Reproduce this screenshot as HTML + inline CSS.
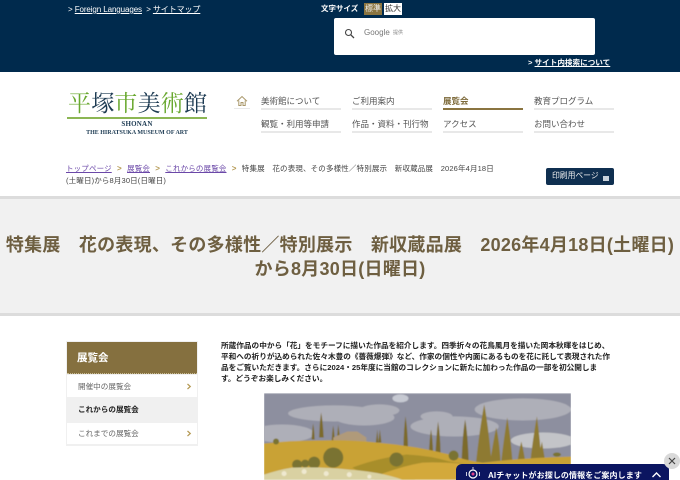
<!DOCTYPE html>
<html lang="ja"><head><meta charset="utf-8"><title>特集展 花の表現</title>
<style>
*{margin:0;padding:0;box-sizing:border-box}
html,body{width:680px;height:480px;overflow:hidden;background:#fff}
body{position:relative;font-family:"Liberation Sans","Noto Sans CJK JP",sans-serif;color:#333}
.a{position:absolute;white-space:nowrap}
.nav{position:absolute;font-size:8.5px;line-height:12px;color:#555;white-space:nowrap}
.ln{position:absolute;height:2px;background:#e8e8e8}
.top{color:#fff;font-size:8px;line-height:12px;letter-spacing:-.1px}
.top u{text-underline-offset:1px}
.crumb{font-size:7.5px;line-height:11px;letter-spacing:.15px;color:#444}
.crumb u{color:#6b48a8}
.crumb b{color:#b59a55;font-size:8px;padding:0 3px}
.side{position:absolute;font-size:7.6px;line-height:12px}
</style></head><body>

<div class="a" style="left:0;top:0;width:680px;height:72px;background:#002a4d"></div>
<div class="a top" style="left:68px;top:4px">&gt; <u>Foreign Languages</u>&nbsp; &gt; <u>サイトマップ</u></div>
<div class="a top" style="left:321px;top:3px;font-weight:bold;font-size:7.5px;letter-spacing:0">文字サイズ</div>
<div class="a" style="left:364px;top:3px;width:18px;height:12px;background:#8a7440;color:#eee;font-size:8px;line-height:12px;text-align:center">標準</div>
<div class="a" style="left:384px;top:3px;width:18px;height:12px;background:#fff;color:#333;font-size:8px;line-height:12px;text-align:center">拡大</div>
<div class="a" style="left:334px;top:18px;width:261px;height:37px;background:#fff;border-radius:2px"></div>
<svg class="a" style="left:344px;top:28px" width="11" height="11" viewBox="0 0 11 11"><circle cx="4.5" cy="4.500" r="3" fill="none" stroke="#444" stroke-width="1.100"/><path d="M6.800 6.800L10 10" stroke="#444" stroke-width="1.300"/></svg>
<div class="a" style="left:364px;top:27px;font-size:8px;line-height:12px;color:#777">Google</div>
<div class="a" style="left:393px;top:29px;font-size:5px;line-height:8px;color:#888">提供</div>
<div class="a top" style="left:528px;top:57px;font-weight:bold;font-size:7.6px;letter-spacing:0">&gt; <u>サイト内検索について</u></div>

<!-- logo -->
<div class="a" style="left:68px;top:90px;font-family:'Liberation Serif','Noto Serif CJK SC',serif;font-size:23px;line-height:28px;letter-spacing:.2px;color:#1c3a52;width:142px;height:29px;overflow:hidden"><span style="color:#69a82f">平</span>塚<span style="color:#69a82f">市</span>美<span style="color:#69a82f">術</span>館</div>
<div class="a" style="left:67px;top:117px;width:140px;height:2px;background:#8cb654"></div>
<div class="a" style="left:67px;top:120px;width:140px;text-align:center;font-family:'Liberation Serif',serif;font-size:7px;line-height:8px;font-weight:bold;color:#1c3a52;letter-spacing:.2px">SHONAN</div>
<div class="a" style="left:67px;top:129px;width:140px;text-align:center;font-family:'Liberation Serif',serif;font-size:6px;line-height:8px;font-weight:bold;color:#1c3a52">THE HIRATSUKA MUSEUM OF ART</div>

<!-- nav -->
<svg class="a" style="left:236px;top:95px" width="12" height="12" viewBox="0 0 12 12"><path d="M1 6.200L6 1.500l5 4.700M2.800 5.500V10.500h2.200V7.500h2V10.500h2.200V5.500" fill="none" stroke="#a9976a" stroke-width="1"/></svg>
<div class="ln" style="left:234px;top:108px;width:16px;height:1px"></div>
<div class="nav" style="left:261px;top:95px">美術館について</div><div class="ln" style="left:261px;top:108px;width:80px"></div>
<div class="nav" style="left:352px;top:95px">ご利用案内</div><div class="ln" style="left:352px;top:108px;width:80px"></div>
<div class="nav" style="left:443px;top:95px;color:#7d6a3a;font-weight:bold">展覧会</div><div class="ln" style="left:443px;top:108px;width:80px;background:#8a7440"></div>
<div class="nav" style="left:534px;top:95px">教育プログラム</div><div class="ln" style="left:534px;top:108px;width:80px"></div>
<div class="nav" style="left:261px;top:118px">観覧・利用等申請</div><div class="ln" style="left:261px;top:131px;width:80px"></div>
<div class="nav" style="left:352px;top:118px">作品・資料・刊行物</div><div class="ln" style="left:352px;top:131px;width:80px"></div>
<div class="nav" style="left:443px;top:118px">アクセス</div><div class="ln" style="left:443px;top:131px;width:80px"></div>
<div class="nav" style="left:534px;top:118px">お問い合わせ</div><div class="ln" style="left:534px;top:131px;width:80px"></div>

<!-- breadcrumb -->
<div class="a crumb" style="left:66px;top:163px"><u>トップページ</u> <b>&gt;</b> <u>展覧会</u> <b>&gt;</b> <u>これからの展覧会</u> <b>&gt;</b> 特集展　花の表現、その多様性／特別展示　新収蔵品展　2026年4月18日</div>
<div class="a crumb" style="left:66px;top:175px">(土曜日)から8月30日(日曜日)</div>
<div class="a" style="left:546px;top:168px;width:68px;height:17px;background:#0f2f50;border-radius:2px;color:#eee;font-size:7.800px;line-height:16px;padding-left:6px">印刷用ページ</div>
<div class="a" style="left:603px;top:176px;width:6px;height:5px;background:#c9d3dc"></div>

<!-- title -->
<div class="a" style="left:0;top:196px;width:680px;height:120px;background:#f1f1f1;border-top:3px solid #dcdcdc;border-bottom:3px solid #dcdcdc"></div>
<div class="a" style="left:0;top:233px;width:680px;text-align:center;font-size:18px;line-height:24px;font-weight:bold;color:#6e5f41;letter-spacing:.25px">特集展　花の表現、その多様性／特別展示　新収蔵品展　2026年4月18日(土曜日)<br>から8月30日(日曜日)</div>

<!-- sidebar -->
<div class="a" style="left:66px;top:341px;width:132px;height:105px;background:#f0f0f0"></div>
<div class="a" style="left:67px;top:342px;width:130px;height:32px;background:#85703f;border-bottom:1px dotted #c9bb92;color:#fff;font-size:10.500px;font-weight:bold;line-height:33px;padding-left:10px">展覧会</div>
<div class="a" style="left:67px;top:375px;width:130px;height:22px;background:#fff"></div>
<div class="a" style="left:67px;top:423px;width:130px;height:21px;background:#fff"></div>
<div class="side" style="left:78px;top:381px;color:#666">開催中の展覧会</div>
<div class="side" style="left:78px;top:404px;color:#222;font-weight:bold">これからの展覧会</div>
<div class="side" style="left:78px;top:428px;color:#666">これまでの展覧会</div>
<svg class="a" style="left:186px;top:383px" width="6" height="7" viewBox="0 0 6 7"><path d="M1.500 1L4.300 3.500L1.500 6" fill="none" stroke="#b59a55" stroke-width="1.200"/></svg>
<svg class="a" style="left:186px;top:430px" width="6" height="7" viewBox="0 0 6 7"><path d="M1.500 1L4.300 3.500L1.500 6" fill="none" stroke="#b59a55" stroke-width="1.200"/></svg>

<!-- body text -->
<div class="a" style="left:221px;top:340px;font-size:7.650px;line-height:11.100px;color:#222;font-weight:bold;white-space:nowrap">所蔵作品の中から「花」をモチーフに描いた作品を紹介します。四季折々の花鳥風月を描いた岡本秋暉をはじめ、<br>平和への祈りが込められた佐々木豊の《薔薇爆弾》など、作家の個性や内面にあるものを花に託して表現された作<br>品をご覧いただきます。さらに2024・25年度に当館のコレクションに新たに加わった作品の一部を初公開しま<br>す。どうぞお楽しみください。</div>

<!-- painting -->
<svg class="a" style="left:264px;top:393px" width="307" height="87" viewBox="0 0 306 86">
<defs><filter id="b" x="0" y="0" width="100%" height="100%"><feGaussianBlur stdDeviation=".6"/></filter></defs>
<g filter="url(#b)">
<rect width="306" height="86" fill="#8d8f9f"/>
<g fill="#aeafb8">
<ellipse cx="70" cy="20" rx="46" ry="8"/><ellipse cx="100" cy="24" rx="30" ry="8"/><ellipse cx="115" cy="17" rx="20" ry="6"/>
<ellipse cx="18" cy="40" rx="32" ry="9"/><ellipse cx="136" cy="5" rx="8" ry="4" fill="#c6c9d2"/>
<ellipse cx="190" cy="33" rx="44" ry="10"/><ellipse cx="172" cy="23" rx="16" ry="5"/>
<ellipse cx="258" cy="16" rx="48" ry="11"/><ellipse cx="278" cy="47" rx="32" ry="8" fill="#c3c4c8"/></g>
<g fill="#7c6a2c">
<path d="M47.500 46Q48 36 49 30Q50 36 50.500 46z"/><path d="M55 44Q55.500 28 57 19Q58.500 28 59.500 44z"/><path d="M67.500 47Q68 38 69 32Q70 38 70.500 47z"/><path d="M73 42L74 31L75.500 42z"/>
<path d="M111.500 49L113 36L114 49zM114 49L115.500 36L117 49z"/><path d="M139 53Q139.500 35 141 23Q143 35 143.500 53z"/><path d="M164.500 59Q165 45 166.500 36Q168 45 168.500 59z"/><path d="M171 59Q172 40 173.500 28Q175.500 40 176 59z"/><path d="M197 67Q198 40 200.500 26Q203 40 204 67z"/></g>
<g fill="#8e7a33"><path d="M211 72Q215 35 219.500 11Q224 35 227 72z"/><path d="M225 72Q228 50 231.500 34Q235 50 236 72z"/><path d="M236 72Q239 45 242.500 24Q246 45 248 72z"/><path d="M252 72Q254 58 256.500 48Q259 58 261 72z"/><path d="M265 72Q268 45 272 23Q275 45 277 72z"/><path d="M272 72L277 48L281 72z"/></g>
<path d="M69 44l14-6 10 0 9 6v4H69z" fill="#b09a7a"/>
<path d="M0 50Q25 47 52 47Q85 46 112 49Q150 52 185 61Q200 67 218 69Q260 64 306 63V86H0z" fill="#c9a236"/>
<path d="M88 74Q115 64 142 61Q165 62 185 68Q200 70 215 72L150 86H110z" fill="#a88e2c"/>
<path d="M118 80Q140 72 158 69Q190 68 215 73L306 70V86H118z" fill="#d3a93b"/>
<g fill="#7a7333"><circle cx="69" cy="64" r="10"/><circle cx="50" cy="69" r="6"/><circle cx="41" cy="70" r="4"/><circle cx="33" cy="71" r="5"/><circle cx="132" cy="66" r="7"/><circle cx="189" cy="62" r="5"/><circle cx="12" cy="48" r="3"/><ellipse cx="292" cy="61" rx="4" ry="2"/></g>
<path d="M0 81Q15 76 28 74Q60 73 85 76Q115 78 138 86H0z" fill="#d9d1a2"/>
<g fill="#efe9d0"><circle cx="20" cy="80" r="2.500"/><circle cx="40" cy="78" r="2.500"/><circle cx="62" cy="80" r="2.500"/><circle cx="85" cy="81" r="2.500"/><circle cx="105" cy="83" r="2"/></g>
</g>
</svg>

<!-- chat bar -->
<div class="a" style="left:456px;top:464px;width:213px;height:16px;background:#0b1560;border-radius:6px 6px 0 0"></div>
<svg class="a" style="left:465px;top:466px" width="16" height="14" viewBox="0 0 16 14"><circle cx="8" cy="8" r="4" fill="none" stroke="#fff" stroke-width="1.200"/><circle cx="8" cy="8" r="1.500" fill="#e0408a"/><path d="M1.500 6v4M14.500 6v4M8 1v3" stroke="#ccd" stroke-width="1"/></svg>
<div class="a" style="left:488px;top:469px;color:#fff;font-size:8px;line-height:13px;font-weight:bold;letter-spacing:.1px">AIチャットがお探しの情報をご案内します</div>
<svg class="a" style="left:651px;top:471px" width="11" height="8" viewBox="0 0 11 8"><path d="M1.500 6L5.500 2l4 4" fill="none" stroke="#fff" stroke-width="1.400"/></svg>
<div class="a" style="left:664px;top:453px;width:16px;height:16px;border-radius:50%;background:#d9d9d9"></div>
<svg class="a" style="left:668px;top:457px" width="8" height="8" viewBox="0 0 8 8"><path d="M1 1l6 6M7 1L1 7" stroke="#444" stroke-width="1.200"/></svg>
</body></html>
